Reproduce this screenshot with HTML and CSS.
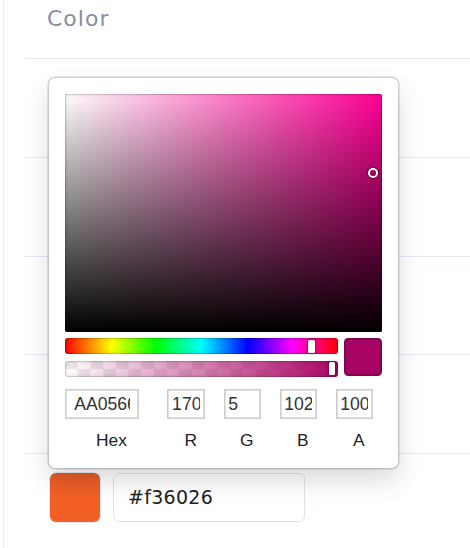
FILE: index.html
```html
<!DOCTYPE html>
<html lang="en">
<head>
<meta charset="utf-8">
<title>Color</title>
<link rel="stylesheet" href="styles.css">
</head>
<body>
<div class="panel">
  <div class="list">
    <div class="header">Color</div>
    <div class="row"></div>
    <div class="row"></div>
    <div class="row"></div>
    <div class="row"></div>
    <div class="field-row">
      <div class="swatch"></div>
      <div class="hex-input">#f36026</div>
    </div>
  </div>

  <div class="picker">
    <div class="saturation">
      <div class="sat-white"></div>
      <div class="sat-black"></div>
      <div class="sat-pointer" style="left: 97.06%; top: 33.33%;"></div>
    </div>
    <div class="controls">
      <div class="sliders">
        <div class="hue">
          <div class="thumb" style="left: 89.3%;"></div>
        </div>
        <div class="alpha">
          <div class="thumb" style="left: 96.8%;"></div>
        </div>
      </div>
      <div class="active-color"></div>
    </div>
    <div class="fields">
      <div class="cell double"><input class="in" value="AA0566"><label class="lbl">Hex</label></div>
      <div class="cell"><input class="in" value="170"><label class="lbl">R</label></div>
      <div class="cell"><input class="in" value="5"><label class="lbl">G</label></div>
      <div class="cell"><input class="in" value="102"><label class="lbl">B</label></div>
      <div class="cell"><input class="in" value="100"><label class="lbl">A</label></div>
    </div>
  </div>
</div>
</body>
</html>
```

FILE: styles.css
```css
* { box-sizing: border-box; }

html, body {
  margin: 0;
  padding: 0;
  background: #fff;
}

body {
  width: 470px;
  height: 548px;
  overflow: hidden;
  font-family: "DejaVu Sans", "Noto Sans", sans-serif;
}

.panel {
  position: relative;
  margin-left: 3px;
  height: 548px;
  border-left: 1px solid #e4ebf7;
}

.list {
  margin-left: 20px;
}

.header {
  height: 59px;
  padding: 2px 0 0 23px;
  border-bottom: 1px solid #e3e8f2;
  font-size: 22px;
  line-height: 33px;
  letter-spacing: 1px;
  color: #878ea3;
}

.row {
  height: 98.75px;
  border-bottom: 1px solid #e3e8f2;
}

.field-row {
  display: flex;
  gap: 13px;
  padding: 19px 0 0 26px;
}

.swatch {
  width: 50px;
  height: 49px;
  border-radius: 6px;
  background: linear-gradient(#e35a27, #f26026 45%, #f36026);
  box-shadow: 0 0 0 1px #e3e7f1;
}

.hex-input {
  width: 192px;
  height: 49px;
  border: 1px solid #dde2ec;
  border-radius: 6px;
  padding-left: 14px;
  font-size: 19px;
  line-height: 47px;
  letter-spacing: 0.3px;
  color: #222;
}

/* Sketch-style picker popover */
.picker {
  position: absolute;
  left: 45px;
  top: 78px;
  width: 349px;
  height: 390px;
  padding: 16px 16px 0;
  background: #fff;
  border-radius: 6px;
  box-shadow: 0 0 0 1.5px rgba(0, 0, 0, 0.17), 0 12px 26px rgba(0, 0, 0, 0.15);
  font-family: "Liberation Sans", Arial, sans-serif;
}

.saturation {
  position: relative;
  width: 100%;
  aspect-ratio: 4 / 3;
  overflow: hidden;
  border-radius: 2px;
  background: #ff0096;
}

.sat-white,
.sat-black {
  position: absolute;
  inset: 0;
}

.sat-white {
  background: linear-gradient(to right, #fff, rgba(255, 255, 255, 0));
}

.sat-black {
  background: linear-gradient(to top, #000, rgba(0, 0, 0, 0));
  box-shadow: inset 0 0 0 1px rgba(0, 0, 0, 0.12), inset 0 0 4px rgba(0, 0, 0, 0.2);
}

.sat-pointer {
  position: absolute;
  width: 6px;
  height: 6px;
  margin: -3px 0 0 -3px;
  border-radius: 50%;
  box-shadow: 0 0 0 2px #fff, inset 0 0 1px 1px rgba(0, 0, 0, 0.3), 0 0 1px 3px rgba(0, 0, 0, 0.4);
}

.controls {
  display: flex;
}

.sliders {
  flex: 1;
  padding: 6.4px 0;
}

.hue,
.alpha {
  position: relative;
  height: 16px;
  border-radius: 3px;
  box-shadow: inset 0 0 0 1px rgba(0, 0, 0, 0.12), inset 0 0 5px rgba(0, 0, 0, 0.18);
}

.hue {
  background: linear-gradient(to right, #f00 0%, #ff0 17%, #0f0 33%, #0ff 50%, #00f 67%, #f0f 83%, #f00 100%);
}

.alpha {
  margin-top: 6.4px;
  background:
    linear-gradient(to right, rgba(170, 5, 102, 0), #aa0566),
    conic-gradient(#fff 25%, #ebebeb 0 50%, #fff 0 75%, #ebebeb 0);
  background-size: 100% 100%, 25.4px 16px;
}

.thumb {
  position: absolute;
  top: 1.6px;
  width: 6.4px;
  height: 12.8px;
  border-radius: 1.6px;
  background: #fff;
  box-shadow: 0 0 3px rgba(0, 0, 0, 0.6);
}

.active-color {
  width: 38px;
  height: 38px;
  margin: 6.4px 0 0 6.4px;
  border-radius: 4.5px;
  background: #aa0566;
  box-shadow: inset 0 0 0 1.5px rgba(0, 0, 0, 0.15), inset 0 0 6px rgba(0, 0, 0, 0.25);
}

.fields {
  display: flex;
  padding-top: 6.4px;
}

.cell {
  flex: 1;
  padding-left: 9.6px;
}

.cell.double {
  flex: 2;
  padding-left: 0;
}

.in {
  display: block;
  width: 80%;
  height: 30px;
  margin: 0;
  padding: 0 10%;
  border: none;
  border-radius: 0;
  outline: none;
  background: #fff;
  box-shadow: inset 0 0 0 1.6px #ccc;
  font-family: "Liberation Sans", Arial, sans-serif;
  font-size: 17.6px;
  color: #333;
}

.lbl {
  display: block;
  padding-top: 11px;
  text-align: center;
  font-size: 17.4px;
  line-height: 20px;
  color: #222;
}
```
